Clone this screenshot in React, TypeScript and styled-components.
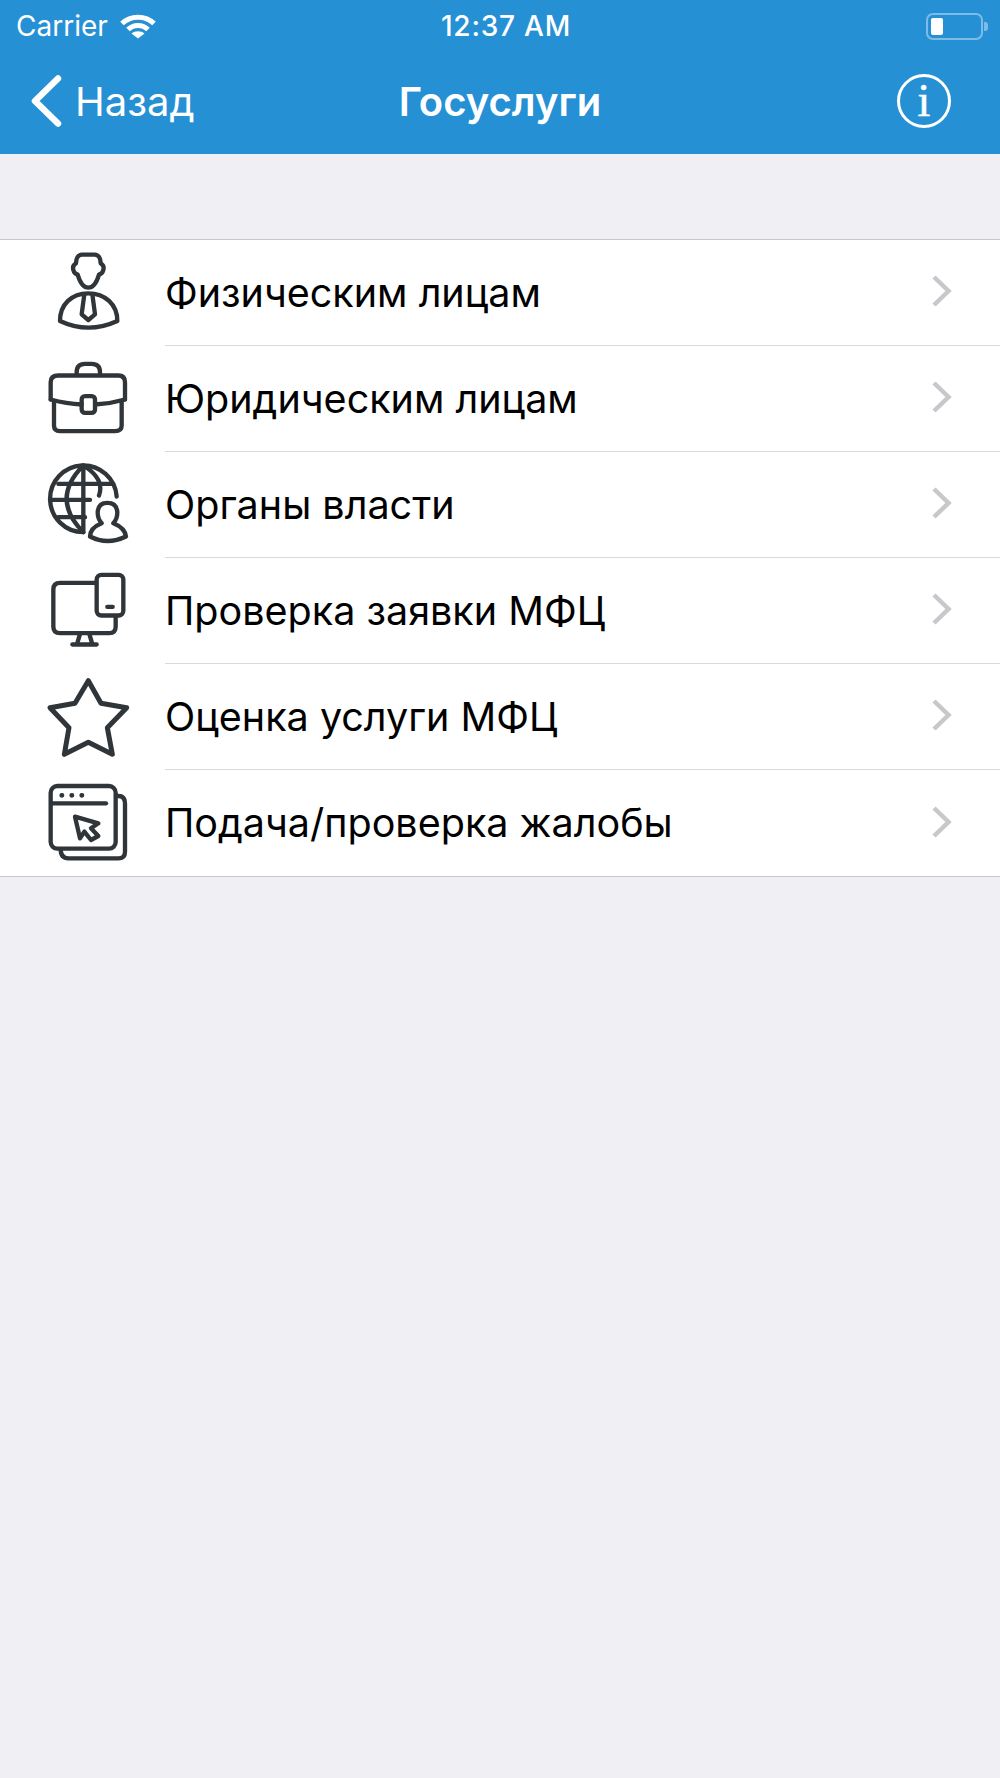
import React from 'react';
import styled, { createGlobalStyle } from 'styled-components';

let Global = createGlobalStyle`
  html, body {
    margin: 0;
    padding: 0;
    background: #efeff4;
  }
  body {
    font-family: Inter, "Liberation Sans", sans-serif;
  }
`;

let Page = styled.div`
  width: 1000px;
  height: 1778px;
  overflow: hidden;
  background: #efeff4;
`;

let Header = styled.header`
  height: 154px;
  background: #2690d5;
  color: #fff;
  display: flex;
  flex-direction: column;
`;

let StatusBar = styled.div`
  height: 52px;
  padding: 0 12px 0 16px;
  display: grid;
  grid-template-columns: 1fr auto 1fr;
  align-items: center;
  font-size: 28px;
`;

let Carrier = styled.div`
  display: flex;
  align-items: center;
  gap: 12px;
`;

let Clock = styled.div`
  font-weight: 500;
  letter-spacing: 0.8px;
  margin-left: 8px;
`;

let Battery = styled.div`
  justify-self: end;
  display: flex;
  align-items: center;
  gap: 1px;
`;

let BatteryCase = styled.div`
  box-sizing: border-box;
  width: 57px;
  height: 27px;
  padding: 3px;
  border: 2px solid rgba(255, 255, 255, 0.4);
  border-radius: 7px;
`;

let BatteryLevel = styled.div`
  width: 12px;
  height: 17px;
  background: #fff;
  border-radius: 2px;
`;

let BatteryNub = styled.div`
  width: 4px;
  height: 9px;
  background: rgba(255, 255, 255, 0.4);
  border-radius: 0 3px 3px 0;
`;

let NavBar = styled.nav`
  flex: 1;
  display: grid;
  grid-template-columns: 1fr auto 1fr;
  align-items: center;
  padding: 0 49px 4px;
`;

let BackLink = styled.div`
  display: flex;
  align-items: center;
  gap: 13px;
  margin-left: -19px;
  font-size: 40px;
`;

let Title = styled.h1`
  margin: 0;
  font-size: 40px;
  font-weight: 600;
`;

let InfoButton = styled.div`
  justify-self: end;
  box-sizing: border-box;
  width: 54px;
  height: 54px;
  border: 3px solid #fff;
  border-radius: 50%;
  display: flex;
  align-items: center;
  justify-content: center;
  font-family: "Liberation Serif", serif;
  font-size: 46px;
  -webkit-text-stroke: 0.6px #fff;
  line-height: 1;
`;

let List = styled.ul`
  list-style: none;
  margin: 85px 0 0;
  padding: 0;
  background: #fff;
  border-top: 1px solid #c8c7cc;
  border-bottom: 1px solid #c8c7cc;
`;

let Row = styled.li`
  height: 106px;
  display: flex;
  align-items: center;
`;

let IconCell = styled.div`
  box-sizing: border-box;
  width: 165px;
  padding-left: 40px;
  display: flex;
  align-items: center;

  svg {
    display: block;
    fill: none;
    stroke: #2f3538;
    stroke-width: 13;
    stroke-linecap: round;
    stroke-linejoin: round;
  }
`;

let RowBody = styled.div<{ $last?: boolean }>`
  box-sizing: border-box;
  flex: 1;
  height: 100%;
  display: flex;
  align-items: center;
  justify-content: space-between;
  padding-right: 48px;
  border-bottom: ${p => (p.$last ? 'none' : '1px solid #d9d9d9')};
`;

let Label = styled.span`
  font-size: 39.5px;
  color: #000;
`;

let ChevronBox = styled.svg`
  margin-top: -3px;
`;

let PersonIcon = () => (
  <svg width="90" height="90" viewBox="30 36 270 270">
    <path d="M156 56H194C206 56 212 68 212 82C220 86 222 94 220 102C218 110 213 114 207 116C200 140 190 155 175 155C160 155 150 140 143 116C137 114 132 110 130 102C128 94 130 86 138 82C138 68 144 56 156 56Z" />
    <path d="M90 255C90 205 125 172 175 172C225 172 262 205 262 255Q175 295 90 255Z" />
    <path d="M163 175L155 235L175 252L195 235L187 175" />
  </svg>
);

let CaseIcon = () => (
  <svg width="90" height="90" viewBox="30 355.5 270 270">
    <path d="M140 418V410Q140 385 165 385H185Q210 385 210 410V418" />
    <path d="M62 492V440Q62 420 85 420H265Q285 420 285 440V492" />
    <path d="M62 492Q110 505 155 507M195 507Q240 505 285 492" />
    <path d="M72 497V570Q72 587 90 587H255Q275 587 275 570V497" />
    <rect x="155" y="482" width="40" height="50" rx="10" />
  </svg>
);

let GlobeIcon = () => (
  <svg width="90" height="90" viewBox="30 28.5 270 270">
    <path d="M260 138A100 100 0 1 0 160 245" />
    <path d="M160 45V245M160 45Q60 145 160 245M160 45Q225 85 207 135" />
    <path d="M85 100H245M60 148H180M85 200H165" />
    <path d="M232 157Q205 157 203 185Q203 205 215 218Q180 232 180 258Q232 285 288 258Q285 232 250 218Q262 205 262 185Q260 157 232 157Z" />
  </svg>
);

let DevicesIcon = () => (
  <svg width="90" height="90" viewBox="30 346.5 270 270">
    <path d="M198 397H90Q70 397 70 417V528Q70 548 90 548H238Q257 548 257 528V497" />
    <rect x="200" y="373" width="80" height="122" rx="14" />
    <path d="M232 469H248" />
    <path d="M150 550L142 578M178 550L186 578M127 582H200" />
  </svg>
);

let StarIcon = () => (
  <svg width="90" height="90" viewBox="30 36 270 270">
    <path d="M175 62L213 130L290 143L232 203L247 283L175 247L103 283L117 203L60 143L135 130Z" strokeWidth="15" />
  </svg>
);

let WindowIcon = () => (
  <svg width="90" height="90" viewBox="30 354 270 270">
    <rect x="62" y="378" width="195" height="188" rx="20" />
    <path d="M65 430H228" />
    <path d="M95 406H96M125 406H126M155 406H156" strokeWidth="14" />
    <path d="M258 408H265Q285 408 285 430V575Q285 595 265 595H115Q92 595 92 568" />
    <path d="M135 470L205 490L183 505L205 528L183 540L163 515L150 535Z" />
  </svg>
);

let Wifi = () => (
  <svg width="36" height="25" viewBox="0 0 36 25" fill="none" stroke="#fff" strokeWidth="5">
    <path d="M2 9.5C10.5 1 25.5 1 34 9.5" />
    <path d="M8 15.5C13.5 10 22.5 10 28 15.5" />
    <path d="M18 24.5L11.5 19.5C15 16.5 21 16.5 24.5 19.5Z" fill="#fff" stroke="none" />
  </svg>
);

let Chevron = () => (
  <ChevronBox width="20" height="32" viewBox="0 0 20 32" fill="none" stroke="#c7c7cc" strokeWidth="4.5">
    <path d="M2 2L16.5 16L2 30" />
  </ChevronBox>
);

let BackChevron = () => (
  <svg width="32" height="52" viewBox="0 0 32 52" fill="none" stroke="#fff" strokeWidth="6.5" strokeLinecap="round" strokeLinejoin="round">
    <path d="M28 3.5L5 26L28 48.5" />
  </svg>
);

let items = [
  { label: 'Физическим лицам', icon: <PersonIcon /> },
  { label: 'Юридическим лицам', icon: <CaseIcon /> },
  { label: 'Органы власти', icon: <GlobeIcon /> },
  { label: 'Проверка заявки МФЦ', icon: <DevicesIcon /> },
  { label: 'Оценка услуги МФЦ', icon: <StarIcon /> },
  { label: 'Подача/проверка жалобы', icon: <WindowIcon /> }
];

export default function App() {
  return (
    <Page>
      <Global />
      <Header>
        <StatusBar>
          <Carrier>
            Carrier
            <Wifi />
          </Carrier>
          <Clock>12:37 AM</Clock>
          <Battery>
            <BatteryCase>
              <BatteryLevel />
            </BatteryCase>
            <BatteryNub />
          </Battery>
        </StatusBar>
        <NavBar>
          <BackLink>
            <BackChevron />
            Назад
          </BackLink>
          <Title>Госуслуги</Title>
          <InfoButton>i</InfoButton>
        </NavBar>
      </Header>
      <List>
        {items.map((item, i) => (
          <Row key={item.label}>
            <IconCell>{item.icon}</IconCell>
            <RowBody $last={i === items.length - 1}>
              <Label>{item.label}</Label>
              <Chevron />
            </RowBody>
          </Row>
        ))}
      </List>
    </Page>
  );
}
